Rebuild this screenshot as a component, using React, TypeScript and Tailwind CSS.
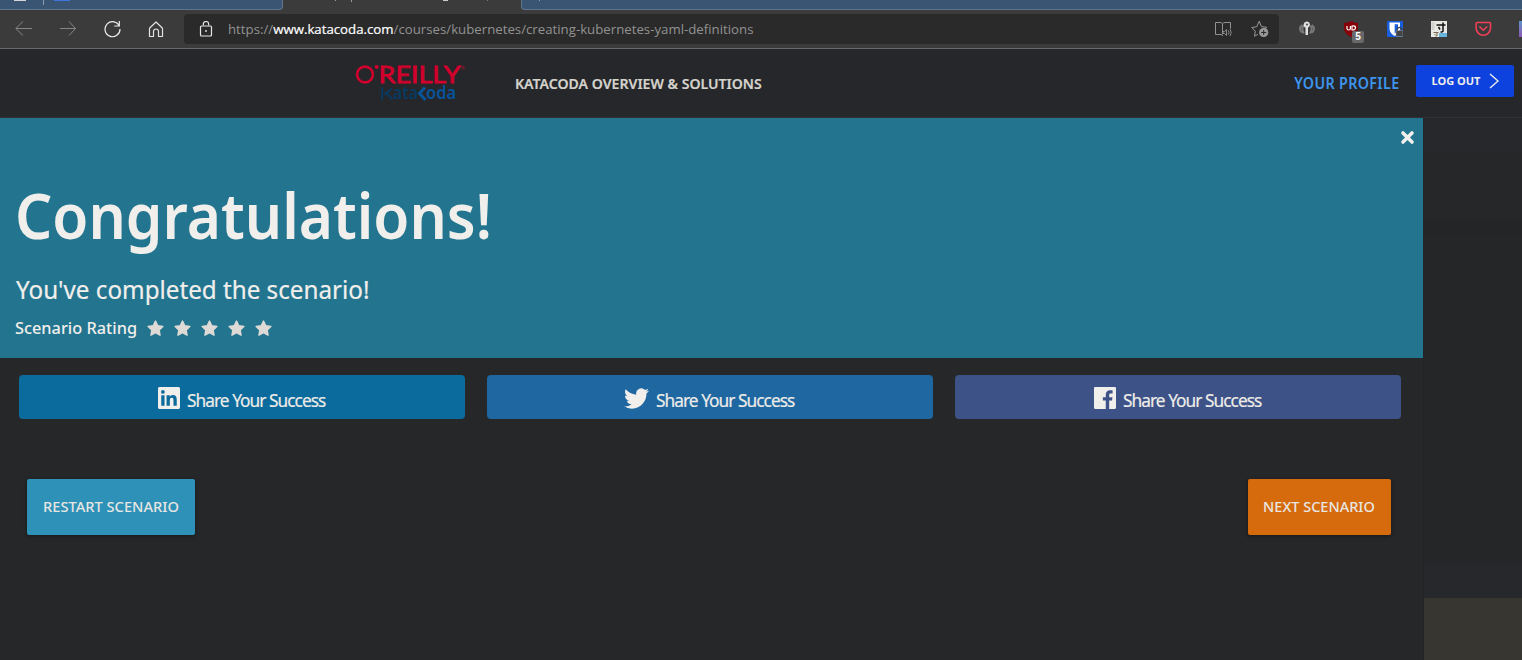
import React from "react";

type IconProps = { className?: string };

const Star = () => (
  <svg viewBox="0 0 24 24" className="h-[17px] w-[17px]">
    <path d="M12 1.500l3.200 6.600 7.200 1-5.200 5.100 1.200 7.300L12 18l-6.400 3.500 1.200-7.300L1.600 9.100l7.200-1z" fill="#dedad5" stroke="#dedad5" strokeWidth="2" strokeLinejoin="round" />
  </svg>
);

const LinkedIn = ({ className }: IconProps) => (
  <svg viewBox="0 0 24 24" className={className} fill="#f1efec">
    <path d="M20.447 20.452h-3.554v-5.569c0-1.328-.027-3.037-1.852-3.037-1.853 0-2.136 1.445-2.136 2.939v5.667H9.351V9h3.414v1.561h.046c.477-.9 1.637-1.850 3.370-1.850 3.601 0 4.267 2.370 4.267 5.455v6.286zM5.337 7.433a2.062 2.062 0 1 1 0-4.125 2.062 2.062 0 0 1 0 4.125zm1.782 13.019H3.555V9h3.564v11.452zM22.225 0H1.771C.792 0 0 .774 0 1.729v20.542C0 23.227.792 24 1.771 24h20.451C23.200 24 24 23.227 24 22.271V1.729C24 .774 23.200 0 22.222 0h.003z" />
  </svg>
);

const Twitter = ({ className }: IconProps) => (
  <svg viewBox="0 2 24 20" className={className} fill="#f1efec">
    <path d="M23.953 4.570a10 10 0 01-2.825.775 4.958 4.958 0 002.163-2.723c-.951.555-2.005.959-3.127 1.184a4.920 4.920 0 00-8.384 4.482C7.690 8.095 4.067 6.130 1.640 3.162a4.822 4.822 0 00-.666 2.475c0 1.710.870 3.213 2.188 4.096a4.904 4.904 0 01-2.228-.616v.060a4.923 4.923 0 003.946 4.827 4.996 4.996 0 01-2.212.085 4.936 4.936 0 004.604 3.417 9.867 9.867 0 01-6.102 2.105c-.390 0-.779-.023-1.170-.067a13.995 13.995 0 007.557 2.209c9.053 0 13.998-7.496 13.998-13.985 0-.210 0-.420-.015-.630A9.935 9.935 0 0024 4.590z" />
  </svg>
);

const Facebook = ({ className }: IconProps) => (
  <svg viewBox="0 0 24 24" className={className} fill="#f1efec">
    <path d="M22.676 0H1.324C.593 0 0 .593 0 1.324v21.352C0 23.408.593 24 1.324 24h11.494v-9.294H9.689v-3.621h3.129V8.410c0-3.099 1.894-4.785 4.659-4.785 1.325 0 2.464.097 2.796.141v3.240h-1.921c-1.500 0-1.792.721-1.792 1.771v2.311h3.584l-.465 3.630H16.560V24h6.115c.733 0 1.325-.592 1.325-1.324V1.324C24 .593 23.408 0 22.676 0" />
  </svg>
);

function TabStrip() {
  return (
    <div className="flex h-[10px] shrink-0 overflow-hidden bg-[#3b3b3b]">
      <div className="flex h-[10px] w-[283px] items-start rounded-br border-r border-b border-[#60778e] bg-[#3a5473] pl-[14px]">
        <span className="h-px w-3 bg-[#d5d7d9]" />
        <span className="ml-[17px] h-[5px] w-px bg-[#8c9bad]" />
        <span className="ml-[10px] h-px w-4 bg-[#3f76db]" />
      </div>
      <div className="flex w-[238px] items-start">
        <span className="ml-[52px] h-px w-px bg-[#999]" />
        <span className="ml-[15px] h-[2px] w-px bg-[#999]" />
        <span className="ml-[91px] h-px w-[5px] bg-[#ccc]" />
        <span className="ml-[39px] h-px w-px bg-[#777]" />
      </div>
      <div className="flex flex-1 items-start rounded-bl border-b border-l border-[#60778e] bg-[#3a5473] pl-[17px]">
        <span className="h-px w-px bg-[#8c9bad]" />
      </div>
    </div>
  );
}

function Toolbar() {
  return (
    <div className="flex h-[39px] shrink-0 items-center border-b border-[#68696b] bg-[#3b3b3b] pl-[15px]">
      <svg width="17" height="16" viewBox="0 0 17 16" className="mr-[27px]" fill="none" stroke="#858585">
        <path d="M.7 7.500H17M8 .5L.8 7.500l7.200 7" />
      </svg>
      <svg width="17" height="16" viewBox="0 0 17 16" className="mr-[28px]" fill="none" stroke="#858585">
        <path d="M1 7.500h16M10 .5l6.500 7-6.500 7" />
      </svg>
      <svg width="17" height="18" viewBox="0 0 17 18" className="mr-[27px]" fill="none" stroke="#eee" strokeWidth="1.200">
        <path d="M15.500 6.500A7.500 7.500 0 1 0 16 9M15.300 1v5h-5" />
      </svg>
      <svg width="16" height="17" viewBox="0 0 16 17" className="mr-[20px]" fill="none" stroke="#e2e2e2" strokeWidth="1.200">
        <path d="M1.500 7.200L8 1l6.500 6.200V15.500h-4v-5a2.500 2.500 0 0 0-5 0v5h-4z" strokeLinejoin="round" />
      </svg>
      <div className="flex h-[30px] w-[1095px] items-center rounded bg-[#2a2a2a] pr-[10px] pl-[15px]">
        <svg width="14" height="17" viewBox="0 0 14 17" className="mr-[15px]" fill="none" stroke="#e6e6e6" strokeWidth="1.200">
          <rect x="1.500" y="5" width="11" height="10" rx="1" />
          <path d="M4.300 4.500V3.200a2.700 2.700 0 0 1 5.400 0v1.300" />
          <circle cx="7" cy="10" r=".9" fill="#e6e6e6" stroke="none" />
        </svg>
        <span className="origin-left scale-x-[1.018] font-['Open_Sans','Noto_Sans',sans-serif] text-[13px] leading-[18px] whitespace-nowrap text-[#929292]">
          https://<span className="text-white [-webkit-text-stroke:.2px_white]">www.katacoda.com</span>/courses/kubernetes/creating-kubernetes-yaml-definitions
        </span>
        <svg width="18" height="17" viewBox="0 0 18 17" className="mr-[19px] ml-auto shrink-0" fill="none" stroke="#929292">
          <path d="M8.500 13V2.500q-1-1-2.500-1H1.500v12H7q1.500 0 1.500 1.500M8.500 2.500q1-1 2.500-1h5.500v6" />
          <path d="M9 10.500h1.500l2-2v6l-2-2H9zM14.300 9.500q1.500 2 0 4M16 8q2.500 3.500 0 7" strokeWidth=".9" />
        </svg>
        <svg width="18" height="18" viewBox="0 0 18 18" className="shrink-0" fill="none" stroke="#999">
          <path d="M7 14.300l-3.500 1.900.8-5L.8 7.500l5-.8L8.200 1.200l2.300 5.500 5.300.6-2 2" strokeLinejoin="round" />
          <circle cx="12.700" cy="12.500" r="4.600" fill="#999" stroke="none" />
          <path d="M12.700 10v5M10.200 12.500h5" stroke="#2a2a2a" />
        </svg>
      </div>
      <div className="flex flex-1 items-center overflow-hidden pl-[20px]">
        <svg width="16" height="16" viewBox="0 0 16 16" className="mr-[28px] shrink-0">
          <path d="M3 4Q-1 8 3 11.500M13 4q4 4 0 7.500M4.600 4.500Q2 8 5 12.500M11.400 4.500q2.600 3.500-.4 8" fill="none" stroke="#777" strokeWidth="2" />
          <path d="M8 .5a3.300 3.300 0 0 0-1.500 6.300V14H9V6.800A3.300 3.300 0 0 0 8 .5z" fill="#e0e0e0" />
          <circle cx="8" cy="3.600" r="1" fill="#444" />
        </svg>
        <div className="mr-[24px] flex h-8 w-[20px] shrink-0 items-start pt-2">
          <svg width="16" height="16" viewBox="0 0 16 16" className="shrink-0">
            <path d="M8 0q3 2 7 2v5q0 6-7 9-7-3-7-9V2q4 0 7-2z" fill="#850008" />
            <path d="M4 5v2.500q0 1.500 1.700 1.500T7.400 7.500V5" fill="none" stroke="#fff" strokeWidth="1.200" />
            <path d="M9 4.500V9q3.500.2 3.500-2.200T9 5" fill="none" stroke="#fff" strokeWidth="1.200" />
          </svg>
          <span className="mt-[10px] -ml-[7px] flex h-[12px] w-[12px] shrink-0 items-center justify-center rounded-[2px] bg-[#686868] font-['Liberation_Sans',sans-serif] text-[10px] leading-[12px] font-bold text-white">5</span>
        </div>
        <svg width="16" height="16" viewBox="0 0 16 16" className="mr-[28px] shrink-0">
          <rect width="16" height="16" rx="1" fill="#175ddc" />
          <path d="M2.500 1.500H13V7.500Q13 12 7.700 15 2.500 12 2.500 7.500z" fill="#fff" />
          <path d="M7.700 3.300H11V8q0 2.500-3.300 4.800z" fill="#175ddc" />
          <path d="M10.300 10V8.500a2.200 2.200 0 0 1 4.400 0V10" fill="none" stroke="#444" strokeWidth="1.300" />
          <rect x="9" y="9.500" width="7" height="6" rx="1" fill="#444" stroke="#bbb" strokeWidth=".4" />
        </svg>
        <svg width="16" height="16" viewBox="0 0 16 16" className="mr-[28px] shrink-0">
          <rect width="16" height="16" fill="#e8e8e5" />
          <rect x="8" y="12" width="8" height="4" fill="#68b4df" />
          <path d="M5.500 4h9M12 1.500V10q0 1-2.500 1M7.500 6l1.500 2.500" stroke="#111" strokeWidth="1.500" fill="none" />
          <path d="M2.500 11.500h5M6 11v4H4.500M3.500 13l1 1" stroke="#776b50" fill="none" />
          <path d="M.5 2h3M.5 4h3M.5 6h3M.5 8h3" stroke="#aaa" strokeWidth=".7" />
        </svg>
        <svg width="17" height="16" viewBox="0 0 17 16" className="mr-[27px] shrink-0" fill="none" stroke="#ef4056" strokeWidth="1.600">
          <path d="M2 1.500h12.500q1 0 1 1v4.500a7.200 7.200 0 0 1-14.400 0V2.500q0-1 1-1z" />
          <path d="M4.800 5.800l3.500 3.400 3.500-3.400" strokeLinecap="round" strokeLinejoin="round" />
        </svg>
        <span className="h-4 w-4 shrink-0 bg-linear-to-b from-[#5a91c8] to-[#8a59b5]" />
      </div>
    </div>
  );
}

function Header() {
  return (
    <header className="flex h-[69px] shrink-0 items-start border-b border-[#2e3033] bg-[#25272a]">
      <svg width="112" height="42" viewBox="0 0 112 42" className="mt-[13px] ml-[355px] shrink-0 overflow-visible font-['Lato',sans-serif]">
        <circle cx="10" cy="12.500" r="7.900" fill="none" stroke="#d3002d" strokeWidth="2.600" />
        <circle cx="21.700" cy="5" r="2" fill="#d3002d" />
        <text x="23.500" y="20.500" fill="#d3002d" stroke="#d3002d" strokeWidth=".8" fontSize="24" textLength="82" lengthAdjust="spacingAndGlyphs">REILLY</text>
        <text x="105.500" y="7.500" fill="#9b1230" fontSize="6">®</text>
        <g fontFamily="Noto Sans" fontSize="17" fontWeight="600">
          <path d="M27.200 25.500v12.500M29 31.500h2.500l5-5M31.500 31.500l6 6" fill="none" stroke="#083a61" strokeWidth="2" />
          <text x="38" y="36.500" fill="#083a61" textLength="25" lengthAdjust="spacingAndGlyphs">ata</text>
          <path d="M70 25.500L64.500 31.500l6 6.500" fill="none" stroke="#07549b" strokeWidth="3" />
          <text x="71" y="36.500" fill="#07549b" textLength="30" lengthAdjust="spacingAndGlyphs">oda</text>
        </g>
      </svg>
      <a className="mt-[25px] ml-[48px] origin-left scale-x-[1.006] text-[14px] leading-5 font-semibold whitespace-nowrap text-[#d6d3cd] [-webkit-text-stroke:.2px_#d6d3cd]">KATACODA OVERVIEW &amp; SOLUTIONS</a>
      <div className="ml-auto flex pr-2">
        <a className="mt-[24px] mr-[17px] origin-right scale-x-[.92] text-[15.5px] leading-5 font-semibold tracking-[.4px] whitespace-nowrap text-[#3d94ed]">YOUR PROFILE</a>
        <button className="mt-4 flex h-8 w-[98px] items-center rounded-[2px] bg-[#0d42df] pl-[15.500px]">
          <span className="w-[50px] origin-left text-left text-[11px] font-bold whitespace-nowrap text-[#eeece9]">LOG OUT</span>
          <svg width="11" height="16" viewBox="0 0 11 16" className="ml-[7px]" fill="none" stroke="#eeece9" strokeWidth="1.400">
            <path d="M1 1l8 7-8 7" />
          </svg>
        </button>
      </div>
    </header>
  );
}

function Hero() {
  return (
    <section className="flex h-[240px] shrink-0 flex-col items-start bg-[#23748f] text-[#f1efec]">
      <button className="mt-3 mr-2 self-end">
        <svg width="15" height="15" viewBox="0 0 15 15" stroke="#f1efec" strokeWidth="3.600" strokeLinecap="round">
          <path d="M3 3l9 9M12 3l-9 9" />
        </svg>
      </button>
      <h1 className="mt-[30px] ml-[15px] origin-left scale-x-[.915] text-[64px] leading-[80px] font-semibold whitespace-nowrap">Congratulations!</h1>
      <p className="mt-[16px] ml-4 origin-left scale-x-[.968] text-[25px] leading-[36px] whitespace-nowrap [-webkit-text-stroke:.2px_#f1efec]">You've completed the scenario!</p>
      <div className="mt-[9px] ml-[15px] flex items-center">
        <span className="w-[132px] origin-left scale-x-[1.02] text-[16px] leading-6 font-medium whitespace-nowrap">Scenario Rating</span>
        <div className="flex gap-[10px]"><Star /><Star /><Star /><Star /><Star /></div>
      </div>
    </section>
  );
}

const shares = [
  { bg: "bg-[#0b6b9c]", icon: <LinkedIn className="mt-[2px] mr-[7px] h-[22px] w-[22px] shrink-0" />, pad: "pl-[139px]" },
  { bg: "bg-[#1e67a1]", icon: <Twitter className="mt-[2px] mr-[7px] h-[21px] w-[25px] shrink-0" />, pad: "pl-[137px]" },
  { bg: "bg-[#3d5387]", icon: <Facebook className="mt-[2px] mr-[7px] h-[22px] w-[22px] shrink-0" />, pad: "pl-[139px]" },
];

export default function App() {
  return (
    <div className="flex h-[660px] w-[1522px] flex-col overflow-hidden bg-[#252729] font-['Noto_Sans',sans-serif]">
      <TabStrip />
      <Toolbar />
      <Header />
      <div className="flex flex-1">
        <main className="flex w-[1423px] flex-col">
          <Hero />
          <div className="mt-[17px] ml-[19px] flex gap-[22px]">
            {shares.map((s) => (
              <button key={s.bg} className={`flex h-11 w-[446px] items-center rounded-[4px] ${s.bg} ${s.pad}`}>
                {s.icon}
                <span className="mt-[5px] origin-left scale-x-[.96] text-[18px] leading-6 tracking-[-1px] whitespace-nowrap text-[#eeece8] [-webkit-text-stroke:.2px_#eeece8]">Share Your Success</span>
              </button>
            ))}
          </div>
          <div className="mt-[60px] mr-8 ml-[27px] flex justify-between text-[14px] font-medium whitespace-nowrap text-[#e8e6e3]">
            <button className="flex h-14 w-[168px] items-center justify-center rounded-[2px] bg-[#2e91b7] pb-[2px] shadow-[0_1px_4px_rgba(0,0,0,.4)]"><span className="scale-x-[1.046]">RESTART SCENARIO</span></button>
            <button className="flex h-14 w-[143px] items-center justify-center rounded-[2px] bg-[#d66b0d] pr-px pb-[2px] shadow-[0_1px_4px_rgba(0,0,0,.4)]"><span className="scale-x-[1.035]">NEXT SCENARIO</span></button>
          </div>
        </main>
        <aside className="flex flex-1 flex-col border-l border-[#222427]">
          <div className="h-[34px] bg-[#27282b]" />
          <div className="h-[68px] bg-[#252729]" />
          <div className="h-[16px] bg-[#232527]" />
          <div className="h-[328px] bg-[#242628]" />
          <div className="h-[34px] bg-[#27282b]" />
          <div className="flex-1 bg-[#383630]" />
        </aside>
      </div>
    </div>
  );
}
